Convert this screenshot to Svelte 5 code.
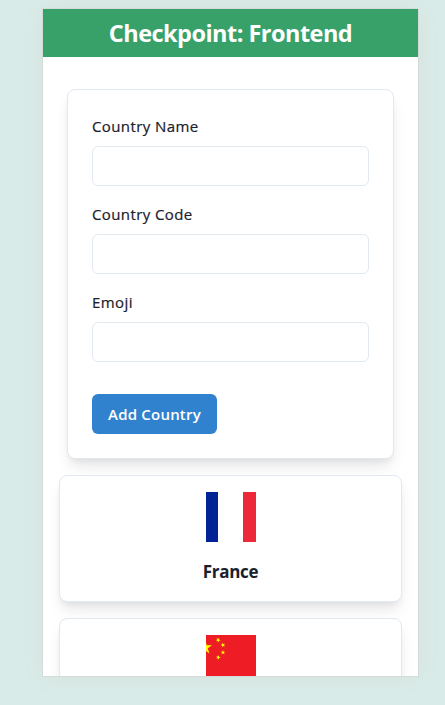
<script>
  let name = $state('');
  let code = $state('');
  let emoji = $state('');
</script>

<main class="stage">
  <div class="device">
    <header><h1>Checkpoint: Frontend</h1></header>
    <form onsubmit={(e) => e.preventDefault()}>
      <label for="name">Country Name</label>
      <input id="name" bind:value={name} />
      <label for="code">Country Code</label>
      <input id="code" bind:value={code} />
      <label for="emoji">Emoji</label>
      <input id="emoji" bind:value={emoji} />
      <button type="submit">Add Country</button>
    </form>
    <div class="list">
      <article>
        <svg width="50" height="50" viewBox="0 0 50 50" shape-rendering="crispEdges" aria-hidden="true">
          <path fill="#002395" d="M0 0h12v50H0z" />
          <path fill="#fff" d="M12 0h25v50H12z" />
          <path fill="#ed2939" d="M37 0h13v50H37z" />
        </svg>
        <h2>France</h2>
      </article>
      <article>
        <svg width="50" height="50" viewBox="0 0 50 50" aria-hidden="true">
          <defs>
            <path id="star" d="M0-1 .2245-.309 .951-.309 .363.118 .588.809 0 .382-.588.809-.363.118-.951-.309-.2245-.309z" />
          </defs>
          <path fill="#ee1c25" d="M0 0h50v50H0z" />
          <g fill="#ff0">
            <use href="#star" transform="translate(-.9 12.5) scale(7.3)" />
            <use href="#star" transform="translate(12.2 5) rotate(23) scale(2.5)" />
            <use href="#star" transform="translate(17 10) rotate(-10) scale(2.5)" />
            <use href="#star" transform="translate(17 17.4) scale(2.5)" />
            <use href="#star" transform="translate(12.2 22.4) rotate(20) scale(2.5)" />
          </g>
        </svg>
      </article>
    </div>
  </div>
</main>

<style>
  :global(body) {
    background: #d9ebe8;
  }
  .stage {
    box-sizing: border-box;
    height: 705px;
    padding: 9px 27px 0 43px;
    overflow: hidden;
    background: #d9ebe8;
    color: #1a202c;
    font-family: "Segoe UI", "Open Sans", "Noto Sans", sans-serif;
  }
  .stage * {
    box-sizing: border-box;
  }
  .device {
    width: 375px;
    height: 667px;
    overflow: hidden;
    background: #fff;
    box-shadow: 0 0 0 1px rgba(200, 160, 160, 0.16), 0 0 24px rgba(150, 80, 60, 0.06);
  }
  header {
    height: 48px;
    background: #38a169;
    color: #fff;
    text-align: center;
  }
  h1 {
    margin: 0;
    font-size: 23.5px;
    line-height: 48px;
    font-weight: 700;
    letter-spacing: -0.53px;
  }
  form,
  article {
    border: 1px solid #e2e8f0;
    border-radius: 8px;
    background: #fff;
    box-shadow: 0 10px 15px -3px rgba(0, 0, 0, 0.1), 0 4px 6px -2px rgba(0, 0, 0, 0.05);
  }
  form {
    height: 370px;
    margin: 32px 24px 16px;
    padding: 24px;
  }
  label {
    display: block;
    width: fit-content;
    margin-bottom: 8px;
    font-size: 15px;
    line-height: 24px;
    font-weight: 500;
    letter-spacing: 0.4px;
    -webkit-text-stroke: 0.2px currentColor;
  }
  input {
    display: block;
    width: 100%;
    height: 40px;
    margin: 0 0 16px;
    padding: 0 16px;
    border: 1px solid #e2e8f0;
    border-radius: 6px;
    background: #fff;
    font: inherit;
    outline: 0;
  }
  button {
    display: block;
    width: 125px;
    height: 40px;
    margin: 32px 0 0;
    padding: 0;
    border: 0;
    border-radius: 6px;
    background: #3182ce;
    color: #fff;
    font: 600 15px/40px "Segoe UI", "Open Sans", "Noto Sans", sans-serif;
    letter-spacing: 0.2px;
    white-space: nowrap;
  }
  .list {
    display: flex;
    flex-direction: column;
    gap: 16px;
    padding: 0 16px;
  }
  article {
    height: 127px;
    padding: 16px;
    text-align: center;
  }
  svg {
    display: block;
    margin: 0 auto;
  }
  h2 {
    margin: 16px 0 0;
    font-size: 17px;
    line-height: 27px;
    font-weight: 700;
    letter-spacing: -0.3px;
  }
</style>
